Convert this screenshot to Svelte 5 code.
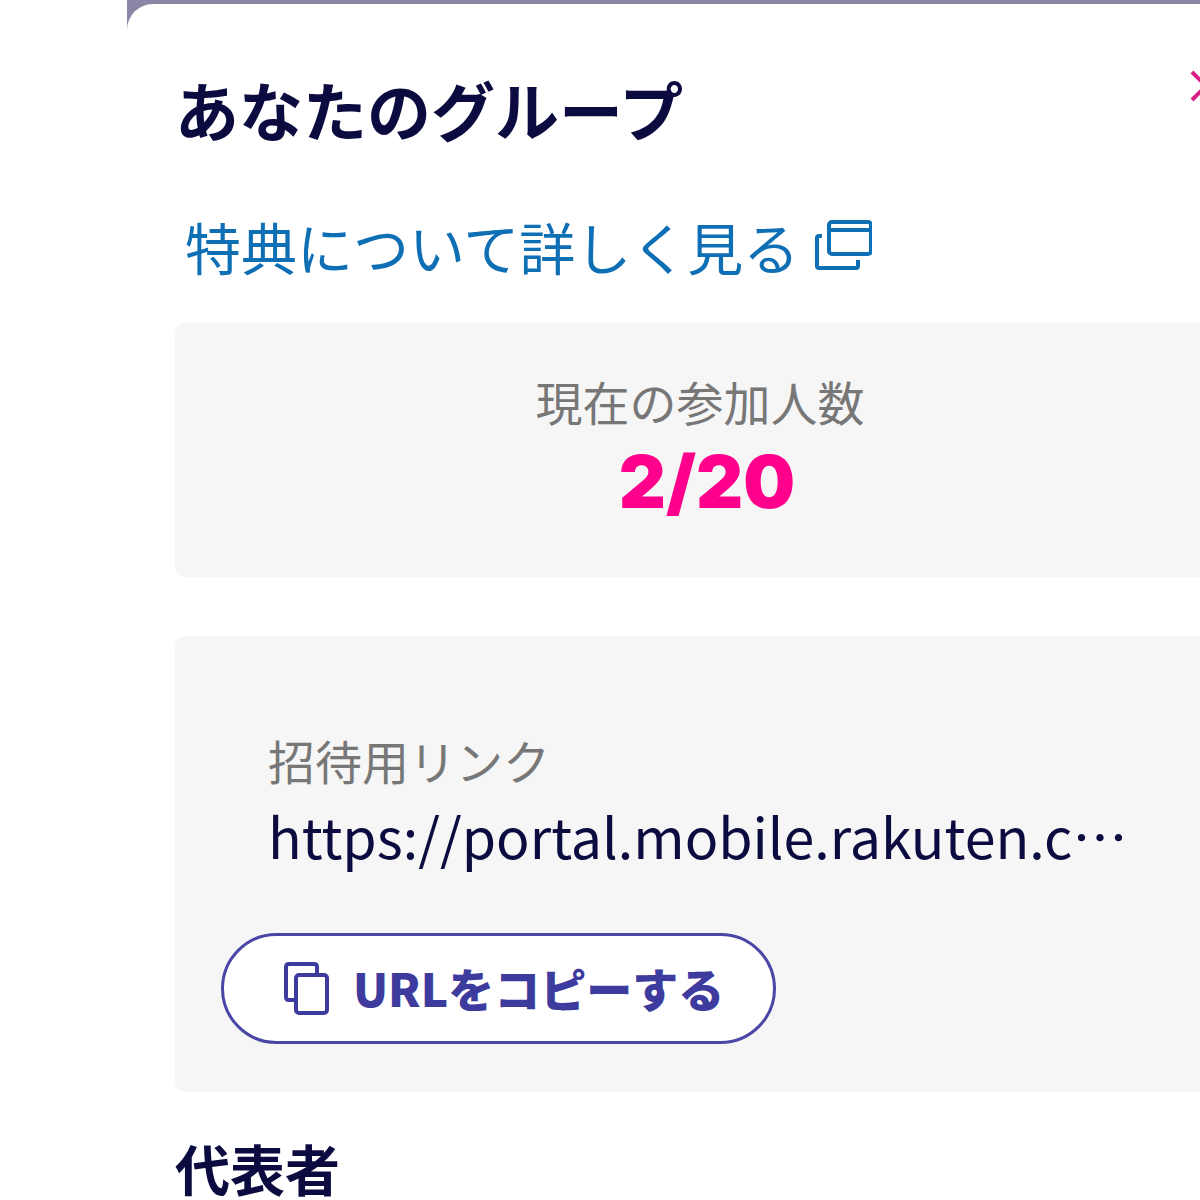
<script lang="ts">
  const inviteUrl = 'https://portal.mobile.rakuten.c';
</script>

<div class="page">
  <div class="backdrop">
    <section class="sheet">
      <button class="close" aria-label="閉じる">
        <svg viewBox="0 0 40 40" width="40" height="40">
          <path d="M6 6 L34 34 M34 6 L6 34" />
        </svg>
      </button>

      <h1>あなたのグループ</h1>

      <a class="benefit" href="#benefit">
        特典について詳しく見る
        <svg viewBox="0 0 58 52" width="58" height="52">
          <rect x="15" y="3" width="42" height="32" rx="3" />
          <path d="M15 11 H57" />
          <path d="M8 17 H5 Q3 17 3 19 V47 Q3 49 5 49 H42 Q44 49 44 47 V41" />
        </svg>
      </a>

      <div class="panel count">
        <div class="count-label">現在の参加人数</div>
        <div class="count-value">2/20</div>
      </div>

      <div class="panel invite">
        <div class="invite-label">招待用リンク</div>
        <div class="invite-url">{inviteUrl}<span class="dots">…</span></div>
        <button class="copy">
          <svg viewBox="0 0 45 53" width="45" height="53">
            <path d="M12 38 H5 Q2 38 2 35 V5 Q2 2 5 2 H30 Q33 2 33 5 V13" />
            <rect x="12" y="13" width="31" height="38" rx="3" />
          </svg>
          <span class="copy-text">URLをコピーする</span>
        </button>
      </div>

      <h2>代表者</h2>
    </section>
  </div>
</div>

<style>
  :global(body) {
    background: #fff;
  }
  .page {
    height: 1200px;
    width: 1200px;
    overflow: hidden;
    padding-left: 127px;
    box-sizing: border-box;
    font-family: 'Noto Sans CJK JP', 'Noto Sans', sans-serif;
  }
  .backdrop {
    width: 1200px;
    height: 1200px;
    box-sizing: border-box;
    padding-top: 4px;
    background: #8a86a6;
  }
  .sheet {
    position: relative;
    height: 100%;
    box-sizing: border-box;
    padding-right: 102px;
    padding-left: 48px;
    background: #fff;
    border-top-left-radius: 26px;
  }
  h1 {
    margin: 0;
    padding-top: 60px;
    font-size: 64px;
    line-height: 88px;
    font-weight: 700;
    color: #0b0b40;
  }
  .close {
    position: absolute;
    left: 1059px;
    top: 62px;
    padding: 0;
    border: 0;
    background: none;
  }
  .close svg {
    fill: none;
    stroke: #d81f86;
    stroke-width: 4;
    display: block;
  }
  .benefit {
    display: flex;
    align-items: center;
    gap: 15px;
    margin: 54px 0 0 10px;
    font-size: 56px;
    line-height: 80px;
    color: #0f6fb5;
    text-decoration: none;
  }
  .benefit svg {
    fill: none;
    stroke: #0f6fb5;
    stroke-width: 4;
    margin-top: -2px;
  }
  .panel {
    background: #f6f6f6;
    border-radius: 10px;
  }
  .count {
    margin-top: 37px;
    height: 254px;
    box-sizing: border-box;
    padding-top: 43px;
    text-align: center;
  }
  .count-label {
    font-size: 47px;
    line-height: 70px;
    color: #777;
  }
  .count-value {
    font-family: Inter, 'Noto Sans', sans-serif;
    font-size: 73px;
    line-height: 92px;
    font-weight: 900;
    color: #ff008c;
    padding-left: 14px;
  }
  .invite {
    margin-top: 59px;
    height: 456px;
    box-sizing: border-box;
    padding: 89px 0 0 46px;
  }
  .invite-label {
    margin-left: 47px;
    font-size: 47px;
    line-height: 70px;
    color: #777;
  }
  .invite-url {
    margin-left: 47px;
    margin-top: 2px;
    font-size: 55.5px;
    line-height: 76px;
    color: #0b0b40;
    white-space: nowrap;
  }
  .dots {
    display: inline-block;
  }
  .copy {
    display: flex;
    align-items: center;
    gap: 24px;
    margin-top: 60px;
    width: 555px;
    height: 111px;
    box-sizing: border-box;
    padding: 0 0 0 60px;
    background: #fff;
    border: 3px solid #4a46a6;
    border-radius: 56px;
    font-family: inherit;
    font-size: 46px;
    font-weight: 900;
    color: #3d3b9e;
  }
  .copy-text {
    margin-top: -3px;
  }
  .copy svg {
    fill: none;
    stroke: #3d3b9e;
    stroke-width: 4;
    flex: none;
  }
  h2 {
    margin: 35px 0 0;
    font-size: 55px;
    line-height: 80px;
    font-weight: 700;
    color: #0b0b40;
  }
</style>
